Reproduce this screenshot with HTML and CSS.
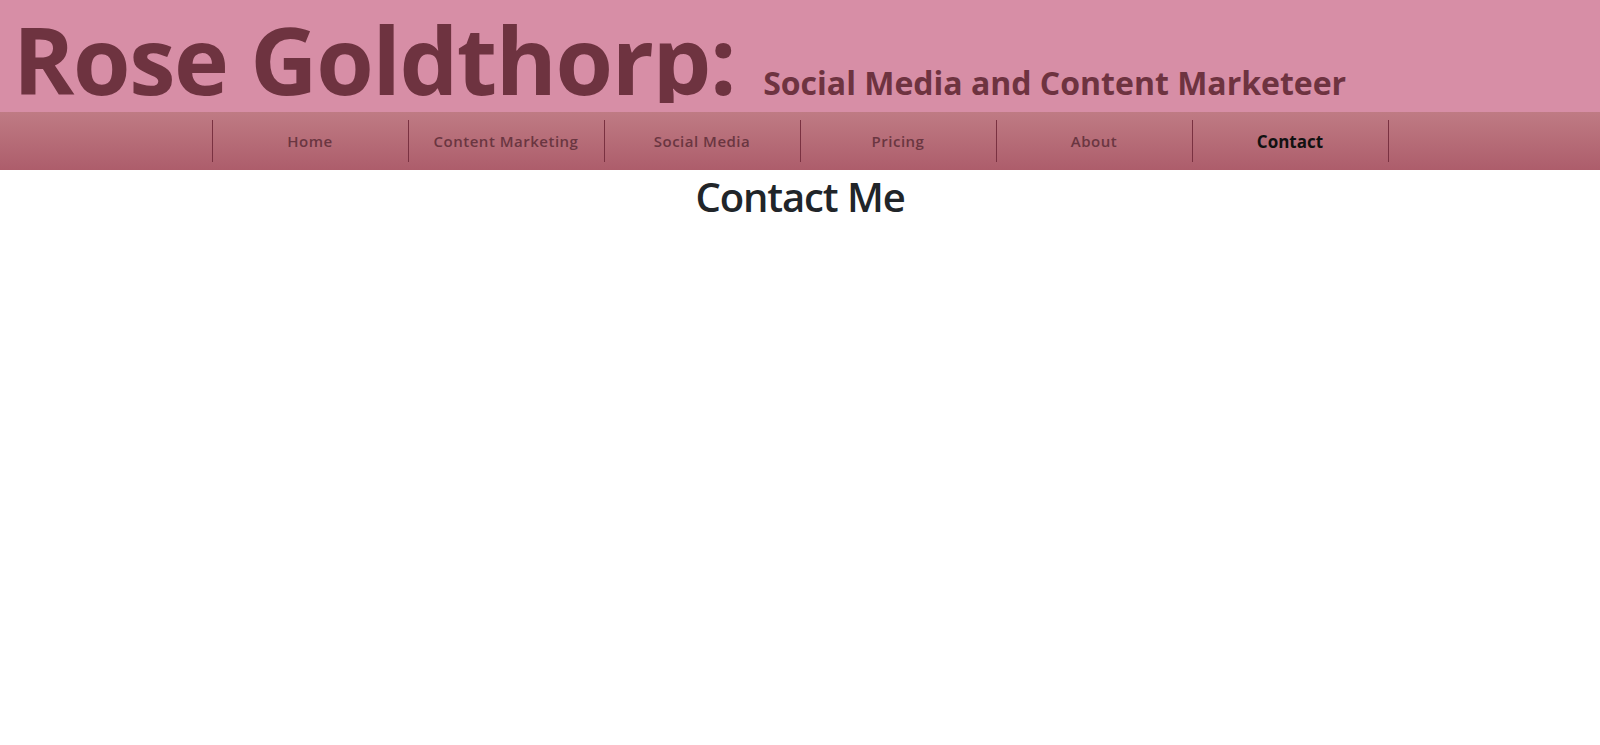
FILE: index.html
```html
<!DOCTYPE html>
<html lang="en">
<head>
<meta charset="utf-8">
<title>Rose Goldthorp - Contact</title>
<link rel="stylesheet" href="styles.css">
</head>
<body>
<header class="site-header">
  <h1 class="brand"><span class="brand-name">Rose Goldthorp:</span><span class="brand-tagline">Social Media and Content Marketeer</span></h1>
</header>
<nav class="main-nav">
  <ul class="nav-list">
    <li class="nav-item"><a class="nav-link" href="#">Home</a></li>
    <li class="nav-item"><a class="nav-link" href="#">Content Marketing</a></li>
    <li class="nav-item"><a class="nav-link" href="#">Social Media</a></li>
    <li class="nav-item"><a class="nav-link" href="#">Pricing</a></li>
    <li class="nav-item"><a class="nav-link" href="#">About</a></li>
    <li class="nav-item"><a class="nav-link active" href="#">Contact</a></li>
  </ul>
</nav>
<main class="content">
  <h1 class="page-title">Contact Me</h1>
</main>
</body>
</html>
```

FILE: styles.css
```css
html, body {
  margin: 0;
  padding: 0;
}

body {
  font-family: "Open Sans", "Noto Sans", sans-serif;
  background: #ffffff;
  color: #212529;
}

.site-header {
  background: #d78ea6;
  height: 112px;
}

.brand {
  box-sizing: border-box;
  height: 103px;
  overflow: hidden;
  margin: 0;
  padding: 3px 0 0 13px;
  display: flex;
  align-items: baseline;
  color: #6e3340;
  white-space: nowrap;
}

.brand-name {
  font-size: 93px;
  line-height: 112px;
  font-weight: 700;
  letter-spacing: -1.4px;
}

.brand-tagline {
  font-size: 32px;
  font-weight: 700;
  margin-left: 28px;
  letter-spacing: 0;
}

.main-nav {
  background: linear-gradient(to bottom, #bf7b84, #ad5d6b);
  padding: 8px 0;
}

.nav-list {
  list-style: none;
  margin: 0;
  padding: 0;
  display: flex;
  justify-content: center;
}

.nav-item {
  box-sizing: border-box;
  width: 196px;
  height: 42px;
  border-left: 1px solid #7a3141;
  display: flex;
  align-items: center;
  justify-content: center;
}

.nav-item:last-child {
  border-right: 1px solid #7a3141;
  width: 197px;
}

.nav-link {
  text-decoration: none;
  color: #6a3641;
  font-size: 15px;
  font-weight: 600;
  letter-spacing: 0.5px;
}

.nav-link.active {
  color: #111111;
  font-size: 17px;
  font-weight: 700;
  letter-spacing: 0;
}

.content {
  text-align: center;
}

.page-title {
  margin: 3px 0 8px;
  font-size: 40px;
  line-height: 48px;
  font-weight: 600;
  color: #212529;
  letter-spacing: -1.1px;
}
```
